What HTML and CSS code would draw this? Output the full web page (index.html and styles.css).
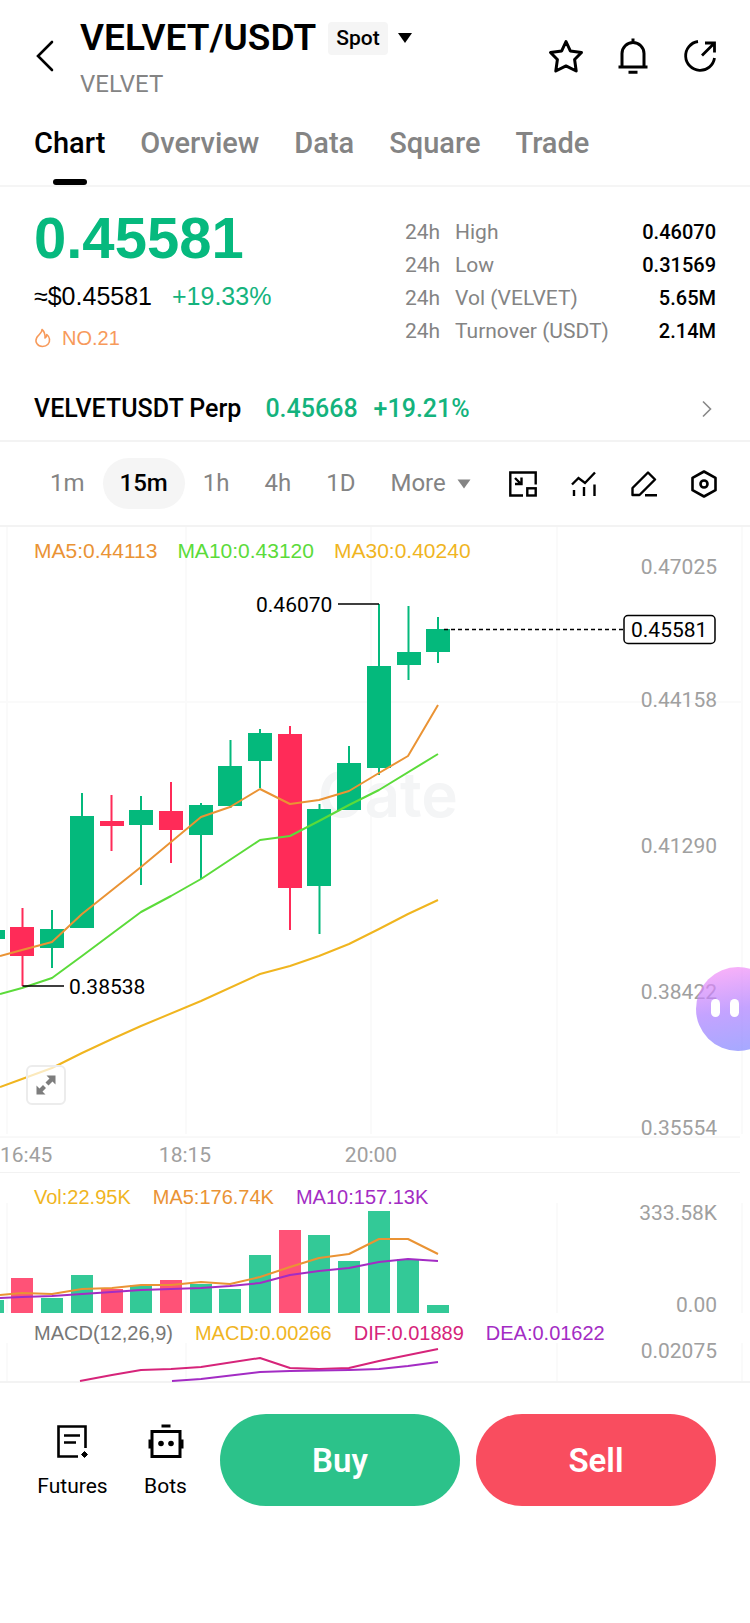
FILE: index.html
```html
<!DOCTYPE html>
<html lang="en">
<head>
    <meta charset="UTF-8">
    <meta name="viewport" content="width=device-width, initial-scale=1.0">
    <title>VELVET/USDT</title>
    <link rel="stylesheet" href="styles.css">
</head>
<body>

    <header class="header">
        <button class="icon-btn back" aria-label="Back">
            <svg width="18" height="32" viewBox="0 0 18 32" fill="none" stroke="#000" stroke-width="2.6" stroke-linecap="round"><path d="M16 2 2 16l14 14"/></svg>
        </button>
        <div class="pair">
            <div class="pair-row">
                <h1>VELVET/USDT</h1>
                <button class="spot">
                    <span class="spot-tag">Spot</span>
                    <svg width="16" height="12" viewBox="0 0 16 12"><path d="M1 1h14L8 11z"/></svg>
                </button>
            </div>
            <div class="pair-name">VELVET</div>
        </div>
        <div class="header-actions">
            <button class="icon-btn" aria-label="Favorite">
                <svg width="36" height="36" viewBox="0 0 36 36" fill="none" stroke="#000" stroke-width="3" stroke-linejoin="round"><path d="M18 3.500 22.300 12.900 33.500 14.500 26.600 21.500 28.200 33 18 27.900 7.800 33 9.400 21.500 2.500 14.500 13.700 12.900z"/></svg>
            </button>
            <button class="icon-btn" aria-label="Price alert">
                <svg width="36" height="36" viewBox="0 0 36 36" fill="none" stroke="#000" stroke-width="3"><path d="M18 0.500v4M7 29V15.500a11 11 0 0 1 22 0V29M3.500 29h29M13.500 34.300h9"/></svg>
            </button>
            <button class="icon-btn" aria-label="Share">
                <svg width="36" height="36" viewBox="0 0 36 36" fill="none" stroke="#000" stroke-width="2.800"><path d="M16 3.500A14.500 14.500 0 1 0 32.500 20M20 17.500 31.500 6M23 5h9.500v9.500"/></svg>
            </button>
        </div>
    </header>

    <nav class="tabs">
        <a href="#chart" class="active">Chart</a>
        <a href="#overview">Overview</a>
        <a href="#data">Data</a>
        <a href="#square">Square</a>
        <a href="#trade">Trade</a>
    </nav>

    <section class="summary">
        <div class="price">
            <div class="price-last">0.45581</div>
            <div class="price-sub">
                <span>≈$0.45581</span>
                <span class="up">+19.33%</span>
            </div>
            <div class="rank">
                <svg width="18" height="20" viewBox="0 0 18 20" fill="none" stroke="#f79a5b" stroke-width="1.600" stroke-linejoin="round"><path d="M8 1.500C8.500 4.500 4.500 6.500 2.800 9.500 0.500 14 3.500 18.500 8.500 18.500c4.800 0 7.500-3.300 7-7.500-.2-2-1.200-3.300-2.700-4.500.1 2-.6 3-1.800 3.500C11.200 6.500 10.300 3.300 8 1.500z"/></svg>
                <span>NO.21</span>
            </div>
        </div>
        <table class="stats">
            <tr><td>24h</td><th>High</th><td>0.46070</td></tr>
            <tr><td>24h</td><th>Low</th><td>0.31569</td></tr>
            <tr><td>24h</td><th>Vol (VELVET)</th><td>5.65M</td></tr>
            <tr><td>24h</td><th>Turnover (USDT)</th><td>2.14M</td></tr>
        </table>
    </section>

    <a href="#perp" class="perp">
        <span>VELVETUSDT Perp</span>
        <span class="perp-price up">0.45668</span>
        <span class="up">+19.21%</span>
        <svg class="perp-arrow" width="20" height="18" viewBox="0 0 20 18" fill="none" stroke="#888" stroke-width="1.600"><path d="M7 1.500 14.500 9 7 16.500"/></svg>
    </a>

    <div class="toolbar">
        <div class="intervals">
            <button>1m</button>
            <button class="active">15m</button>
            <button>1h</button>
            <button>4h</button>
            <button>1D</button>
            <button class="more">More <svg width="14" height="10" viewBox="0 0 14 10" fill="#848484"><path d="M0.500 0.500h13L7 9.500z"/></svg></button>
        </div>
        <div class="tools">
            <button class="icon-btn" aria-label="Picture in picture">
                <svg width="28" height="26" viewBox="0 0 28 26" fill="none" stroke="#000" stroke-width="2.400"><path d="M14 24.500H1.300V1.500h25.400v12M6 7l6 6M12.500 6.500v6.500H6"/><rect x="18.300" y="17.300" width="8.400" height="7.200"/></svg>
            </button>
            <button class="icon-btn" aria-label="Indicators">
                <svg width="26" height="26" viewBox="0 0 26 26" fill="none" stroke="#000" stroke-width="2.400"><path d="M1 13.500 7.500 7l6.500 5L24 1.500M3 19v6M13 16v9M23.500 13.500V25"/></svg>
            </button>
            <button class="icon-btn" aria-label="Draw">
                <svg width="26" height="26" viewBox="0 0 26 26" fill="none" stroke="#000" stroke-width="2.400" stroke-linejoin="round"><path d="M17 1.500 24 8.500 8.500 24H1.500V17zM14 24.200h12"/></svg>
            </button>
            <button class="icon-btn" aria-label="Chart settings">
                <svg width="26" height="28" viewBox="0 0 26 28" fill="none" stroke="#000" stroke-width="2.600" stroke-linejoin="round"><path d="M13 1.500 24.500 7.800V20.200L13 26.500 1.500 20.200V7.800z"/><circle cx="13" cy="14" r="3.500"/></svg>
            </button>
        </div>
    </div>

    <main class="chart" id="chart">
        <section class="pane">
            <div class="legend legend-price">
                <span class="orange">MA5:0.44113</span>
                <span class="lime">MA10:0.43120</span>
                <span class="yellow">MA30:0.40240</span>
            </div>
            <svg class="plot" viewBox="0 0 750 646">
                <path class="grid" d="M7 0V607M186 0V607M371 0V607M557 0V607M742 0V607M0 175H742"/>
                <path class="axis-line" d="M0 610H740M0 645.500H740"/>
                <text class="watermark" x="458" y="290" text-anchor="end">Gate</text>

                <!-- candles -->
                <g class="green">
                    <rect x="-19" y="403" width="24" height="9"/>
                    <path d="M52 383V441M82 266V401M141 269V358M201 276V352M230.500 213V281M260 202V261M319.500 277V407M349 219V283M379 77V248M408.500 79V153M438 90V136"/>
                    <rect x="40" y="402" width="24" height="19"/>
                    <rect x="70" y="289" width="24" height="112"/>
                    <rect x="129" y="283" width="24" height="15"/>
                    <rect x="189" y="278" width="24" height="30"/>
                    <rect x="218" y="239" width="24" height="40"/>
                    <rect x="248" y="206" width="24" height="28"/>
                    <rect x="307" y="282" width="24" height="77"/>
                    <rect x="337" y="236" width="24" height="47"/>
                    <rect x="367" y="139" width="24" height="102"/>
                    <rect x="397" y="125" width="24" height="13"/>
                    <rect x="426" y="102" width="24" height="23"/>
                </g>
                <g class="red">
                    <path d="M22.500 381V459M111.500 268V324M171 255V336M290 199V403"/>
                    <rect x="10" y="400" width="24" height="29"/>
                    <rect x="100" y="294" width="24" height="5"/>
                    <rect x="159" y="284" width="24" height="19"/>
                    <rect x="278" y="207" width="24" height="154"/>
                </g>

                <!-- moving averages -->
                <polyline class="line orange" points="0,429 22,423 52,415 82,387 141,340 201,290 230,280 260,262 290,277 319,273 349,264 379,246 408,229 438,178"/>
                <polyline class="line lime" points="0,467 22,461 52,451 82,429 141,385 171,369 201,352 260,313 290,309 319,294 349,278 379,263 438,227"/>
                <polyline class="line yellow" points="0,560 22,552 52,541 82,526 112,512 141,499 201,474 260,447 290,439 319,429 349,417 379,402 408,387 438,373"/>

                <!-- high / low / last -->
                <path class="mark" d="M338 77H379M22.500 459H64"/>
                <text class="value" x="256" y="85">0.46070</text>
                <text class="value" x="69" y="467">0.38538</text>
                <path class="mark dashed" d="M444 102.500H624"/>
                <rect class="last-box" x="624" y="88.500" width="91" height="28" rx="4"/>
                <text class="value" x="631" y="110">0.45581</text>

                <g class="scale" text-anchor="end">
                    <text x="717" y="47">0.47025</text>
                    <text x="717" y="180">0.44158</text>
                    <text x="717" y="326">0.41290</text>
                    <text x="717" y="472">0.38422</text>
                    <text x="717" y="608">0.35554</text>
                </g>
                <g class="scale">
                    <text x="0" y="635">16:45</text>
                    <text x="185" y="635" text-anchor="middle">18:15</text>
                    <text x="371" y="635" text-anchor="middle">20:00</text>
                </g>
            </svg>
            <button class="expand" aria-label="Full screen">
                <svg width="20" height="20" viewBox="0 0 20 20" fill="#7d7d7d"><path d="M10.500 0.500h9v9l-3-3-4 4-3-3 4-4zM9.500 19.500h-9v-9l3 3 3.500-3.500 3 3L6.500 16.500z"/></svg>
            </button>
            <button class="assistant" aria-label="Assistant"><i></i><i></i></button>
        </section>

        <section class="pane">
            <div class="legend">
                <span class="yellow">Vol:22.95K</span>
                <span class="orange">MA5:176.74K</span>
                <span class="purple">MA10:157.13K</span>
            </div>
            <svg class="plot" viewBox="0 0 750 140">
                <path class="grid" d="M7 30V140M186 30V140M557 30V140M742 30V140"/>
                <g class="green-bar">
                    <rect x="-18" y="127" width="22" height="13"/>
                    <rect x="41" y="125" width="22" height="15"/>
                    <rect x="71" y="102" width="22" height="38"/>
                    <rect x="130" y="112" width="22" height="28"/>
                    <rect x="190" y="111" width="22" height="29"/>
                    <rect x="219" y="116" width="22" height="24"/>
                    <rect x="249" y="82" width="22" height="58"/>
                    <rect x="308" y="62" width="22" height="78"/>
                    <rect x="338" y="88" width="22" height="52"/>
                    <rect x="368" y="38" width="22" height="102"/>
                    <rect x="397" y="86" width="22" height="54"/>
                    <rect x="427" y="132" width="22" height="8"/>
                </g>
                <g class="red-bar">
                    <rect x="11" y="105" width="22" height="35"/>
                    <rect x="101" y="116" width="22" height="24"/>
                    <rect x="160" y="107" width="22" height="33"/>
                    <rect x="279" y="57" width="22" height="83"/>
                </g>
                <polyline class="line orange" points="0,122 22,120 52,121 82,116 112,115 141,112 171,112 201,109 230,111 260,104 290,94 319,85 349,81 379,66 408,66 438,81"/>
                <polyline class="line purple" points="0,125 22,124 52,123 82,121 112,119 141,117 201,115 230,113 260,110 290,102 319,98 349,95 379,89 408,86 438,88"/>
                <g class="scale" text-anchor="end">
                    <text x="717" y="47">333.58K</text>
                    <text x="717" y="139">0.00</text>
                </g>
            </svg>
        </section>

        <section class="pane">
            <div class="legend legend-macd">
                <span class="gray">MACD(12,26,9)</span>
                <span class="yellow">MACD:0.00266</span>
                <span class="pink">DIF:0.01889</span>
                <span class="purple">DEA:0.01622</span>
            </div>
            <svg class="plot" viewBox="0 0 750 68">
                <path class="grid" d="M7 30V68M186 30V68M557 30V68M742 30V68"/>
                <polyline class="line pink" points="80,68 112,62 141,57 171,56 201,54 260,45 290,55 319,56 349,55 379,48 438,36"/>
                <polyline class="line purple" points="172,68 201,66 260,59 290,58 349,57 379,56 408,53 438,49"/>
                <g class="scale" text-anchor="end">
                    <text x="717" y="45">0.02075</text>
                </g>
            </svg>
        </section>
    </main>

    <footer class="footer">
        <a href="#futures" class="shortcut">
            <svg width="36" height="36" viewBox="0 0 36 36" fill="none" stroke="#000" stroke-width="2.600"><path d="M23 33.500H3.500V3.500h27V25M9 12.500h16M9 19.500h12"/><path d="M29.500 28.500 32.500 31.500 29.500 34.500 26.500 31.500z" fill="#000" stroke-width="1"/></svg>
            <span>Futures</span>
        </a>
        <a href="#bots" class="shortcut">
            <svg width="36" height="36" viewBox="0 0 36 36" fill="none" stroke="#000" stroke-width="3"><path d="M13.500 3h9M4 8.500h28v25H4zM2 16.500v9M34 16.500v9"/><g fill="#000" stroke="none"><circle cx="13" cy="20.500" r="2.800"/><circle cx="23" cy="20.500" r="2.800"/></g></svg>
            <span>Bots</span>
        </a>
        <button class="trade buy">Buy</button>
        <button class="trade sell">Sell</button>
    </footer>

</body>
</html>
```
FILE: styles.css
```css
* {
    box-sizing: border-box;
}

body {
    margin: 0;
    background-color: #fff;
    color: #000;
    font-family: Roboto, Arial, sans-serif;
}

button {
    margin: 0;
    padding: 0;
    border: none;
    background: none;
    color: inherit;
    font: inherit;
    cursor: pointer;
}

a {
    color: inherit;
    text-decoration: none;
}

svg {
    display: block;
}

.up {
    color: #14b37d;
}

/* Header */
.header {
    display: flex;
    align-items: center;
    padding: 0 32px;
    height: 112px;
}

.back {
    width: 48px;
    padding-left: 4px;
}

.pair {
    flex: 1;
    padding-top: 8px;
}

.pair-row {
    display: flex;
    align-items: center;
    gap: 12px;
    height: 48px;
}

h1 {
    margin: 0;
    font-size: 37px;
    line-height: 48px;
    font-weight: 600;
}

.spot {
    display: flex;
    align-items: center;
    gap: 9px;
}

.spot-tag {
    padding: 0 8px;
    border-radius: 4px;
    background-color: #f5f5f5;
    font-size: 21px;
    line-height: 33px;
    font-weight: 500;
}

.pair-name {
    color: #848484;
    font-size: 24px;
    line-height: 44px;
}

.header-actions {
    display: flex;
    gap: 31px;
}

/* Tabs */
.tabs {
    display: flex;
    gap: 35px;
    padding: 0 34px;
    border-bottom: 2px solid #f5f5f5;
    color: #848484;
    font-size: 29px;
    font-weight: 500;
}

.tabs a {
    height: 73px;
    line-height: 63px;
}

.tabs .active {
    display: flex;
    flex-direction: column;
    justify-content: space-between;
    align-items: center;
    color: #000;
}

.tabs .active::after {
    content: '';
    width: 34px;
    height: 6px;
    border-radius: 3px;
    background-color: #000;
}

/* Price summary */
.summary {
    display: flex;
    justify-content: space-between;
    padding: 21px 34px 0;
    height: 190px;
}

.price {
    font-family: "Liberation Sans", Arial, sans-serif;
}

.price-last {
    color: #06b97e;
    font-size: 58px;
    line-height: 60px;
    font-weight: bold;
}

.price-sub {
    display: flex;
    gap: 20px;
    font-size: 25px;
    line-height: 56px;
}

.rank {
    display: flex;
    align-items: center;
    gap: 10px;
    color: #f79a5b;
    font-size: 20px;
    line-height: 28px;
}

.stats {
    align-self: flex-start;
    width: 311px;
    margin-top: 8px;
    border-collapse: collapse;
    color: #848484;
    font-size: 21px;
    line-height: 33px;
}

.stats td,
.stats th {
    padding: 0;
    font-weight: normal;
    text-align: left;
}

.stats td:first-child {
    width: 50px;
}

.stats td:last-child {
    color: #000;
    font-size: 20px;
    font-weight: 500;
    text-align: right;
}

/* Perpetual link */
.perp {
    display: flex;
    align-items: center;
    gap: 16px;
    height: 65px;
    padding: 0 34px;
    border-bottom: 2px solid #f3f3f3;
    font-size: 25px;
    font-weight: 500;
}

.perp-price {
    margin-left: 8px;
}

.perp-arrow {
    margin-left: auto;
}

/* Intervals and tools */
.toolbar {
    display: flex;
    justify-content: space-between;
    align-items: center;
    height: 85px;
    padding: 0 33px;
    border-bottom: 2px solid #f3f3f3;
}

.intervals {
    display: flex;
    gap: 1px;
    color: #848484;
    font-size: 24px;
    line-height: 51px;
}

.intervals button {
    padding: 0 17px;
}

.intervals .active {
    border-radius: 26px;
    background-color: #f5f5f5;
    color: #000;
    font-weight: 500;
}

.intervals .more {
    display: flex;
    align-items: center;
    gap: 11px;
    padding-right: 0;
}

.tools {
    display: flex;
    align-items: center;
    gap: 34px;
}

/* Chart */
.chart {
    overflow-x: clip;
}

.pane {
    position: relative;
}

.legend {
    position: absolute;
    top: 12px;
    left: 34px;
    display: flex;
    gap: 22px;
    font-family: "Liberation Sans", Arial, sans-serif;
    font-size: 20px;
    line-height: 24px;
    white-space: nowrap;
}

.legend-price {
    gap: 20px;
    font-size: 21px;
}

.legend-macd {
    top: 8px;
}

.plot {
    width: 100%;
    height: auto;
    overflow: visible;
}

.orange {
    color: #ea9334;
}

.lime {
    color: #5bdb3a;
}

.yellow {
    color: #f0b51f;
}

.purple {
    color: #a32cc4;
}

.pink {
    color: #d6247a;
}

.gray {
    color: #777;
}

.line {
    fill: none;
    stroke: currentColor;
    stroke-width: 2;
    stroke-linejoin: round;
}

.grid {
    fill: none;
    stroke: #fafafa;
    stroke-width: 2;
}

.axis-line {
    stroke: #f2f2f2;
}

.green {
    fill: #04b97c;
    stroke: #04b97c;
}

.red {
    fill: #ff2b58;
    stroke: #ff2b58;
}

.green rect,
.red rect {
    stroke: none;
}

.green path,
.red path {
    stroke-width: 2;
}

.green-bar {
    fill: #33c997;
}

.red-bar {
    fill: #ff5277;
}

.mark {
    stroke: #000;
    stroke-width: 1.5;
}

.dashed {
    stroke-dasharray: 4 3;
}

.last-box {
    fill: #fff;
    stroke: #000;
    stroke-width: 1.5;
}

.value {
    font-size: 21px;
}

.scale {
    fill: #a0a0a0;
    font-size: 21px;
}

.watermark {
    fill: #f4f5f6;
    font-family: Inter, sans-serif;
    font-size: 62px;
    font-weight: 600;
}

.expand {
    position: absolute;
    left: 26px;
    bottom: 68px;
    display: flex;
    align-items: center;
    justify-content: center;
    width: 40px;
    height: 40px;
    border: 2px solid #ececec;
    border-radius: 6px;
    background-color: rgba(255, 255, 255, 0.7);
}

.assistant {
    position: absolute;
    right: -30px;
    bottom: 122px;
    display: flex;
    gap: 10px;
    width: 84px;
    height: 84px;
    padding: 32px 0 0 15px;
    border-radius: 42px;
    background: linear-gradient(170deg, rgba(255, 146, 246, 0.7), rgba(171, 124, 255, 0.7) 50%, rgba(122, 134, 255, 0.7));
}

.assistant i {
    width: 9px;
    height: 18px;
    border-radius: 5px;
    background-color: #fff;
}

/* Bottom bar */
.footer {
    display: flex;
    gap: 16px;
    padding: 31px 34px 115px;
    border-top: 2px solid #f3f3f3;
}

.shortcut {
    display: flex;
    flex-direction: column;
    align-items: center;
    gap: 11px;
    width: 77px;
    padding-top: 9px;
    font-size: 21px;
    line-height: 32px;
}

.trade {
    flex: 1;
    height: 92px;
    border-radius: 46px;
    color: #fff;
    font-size: 33px;
    font-weight: 600;
}

.buy {
    background-color: #2cc28a;
}

.sell {
    background-color: #f94d5f;
}
```
